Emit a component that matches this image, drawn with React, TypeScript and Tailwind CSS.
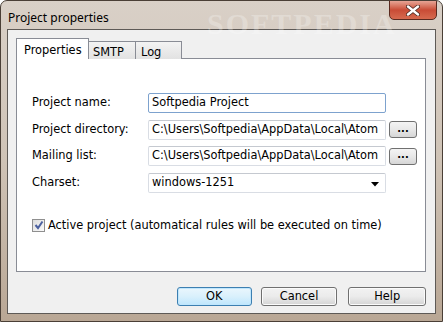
import React from "react";

const ui = { fontFamily: '"DejaVu Sans", Verdana, sans-serif' };

const Field = ({ label, value, browse, select, focused }: { label: string; value: string; browse?: boolean; select?: boolean; focused?: boolean }) => (
    <div className="flex items-center h-[20px]">
        <div className="w-[116px] shrink-0 text-[11.4px] text-black">{label}</div>
        <div
            className={`relative w-[238px] h-[20px] bg-white border rounded-[2px] flex items-center pl-[3px] overflow-hidden whitespace-nowrap text-[11.4px] text-black ${
                focused ? "border-[#7da2ce]" : "border-[#d9dde4] border-t-[#c5c9d0]"
            }`}
        >
            <span className="truncate">{value}</span>
            {select && (
                <svg className="absolute right-[6px] top-[8px]" width="8" height="5" viewBox="0 0 8 5">
                    <path d="M0 0 H8 L4 4.5 Z" fill="#000" />
                </svg>
            )}
        </div>
        {browse && (
            <button className="ml-[3px] w-[28px] h-[17px] rounded-[3px] border border-[#707070] bg-gradient-to-b from-[#f4f4f4] via-[#e8e8e8] to-[#d6d6d6] text-[10px] leading-none font-bold pb-[2px] text-black">
                ...
            </button>
        )}
    </div>
);

const Btn = ({ label, cls, def }: { label: string; cls: string; def?: boolean }) => (
    <button
        className={`${cls} h-[19px] rounded-[3px] border text-[11.4px] leading-none text-black ${
            def
                ? "border-[#3c7fb1] bg-gradient-to-b from-[#eaf6fd] via-[#d9f0fc] to-[#bee6fd] shadow-[inset_0_0_0_1px_#bfe6fd]"
                : "border-[#707070] bg-gradient-to-b from-[#f2f2f2] via-[#ebebeb] to-[#d4d4d4] shadow-[inset_0_0_0_1px_#fbfbfb]"
        }`}
    >
        {label}
    </button>
);

export default function App() {
    return (
        <div className="w-[443px] h-[322px] relative overflow-hidden rounded-t-[7px] border border-[#4a3f36] bg-gradient-to-b from-[#d9d0c7] via-[#cfc3b6] to-[#b9a795] flex flex-col" style={ui}>
            {/* watermark */}
            <div className="absolute left-[206px] top-[0px] text-[30px] font-bold tracking-[2px] text-white/25 select-none" style={{ fontFamily: '"Liberation Serif", serif' }}>
                SOFTPEDIA
            </div>

            {/* title bar */}
            <div className="h-[28px] shrink-0 flex items-start relative">
                <span className="ml-[7px] mt-[8px] text-[12px] text-black" style={{ fontFamily: '"Noto Sans", "Open Sans", sans-serif' }}>
                    Project properties
                </span>
                <div className="ml-auto mr-[5px] -mt-px w-[48px] h-[20px] rounded-b-[5px] border border-[#5a2a20] bg-gradient-to-b from-[#e6a495] via-[#c94c36] to-[#d66a4f] flex items-center justify-center">
                    <svg width="14" height="11" viewBox="0 0 14 11">
                        <path d="M2 1.5 L12 9.5 M12 1.5 L2 9.5" stroke="#4a2a22" strokeWidth="4" strokeLinecap="round" />
                        <path d="M2 1.5 L12 9.5 M12 1.5 L2 9.5" stroke="#fff" strokeWidth="2.4" strokeLinecap="round" />
                    </svg>
                </div>
            </div>

            {/* client area */}
            <div className="mx-[6px] h-[285px] shrink-0 border border-[#5e5a56] bg-[#f0f0f0] flex flex-col pt-[8px] pl-[8px] pr-[9px]">
                {/* tabs */}
                <div className="flex items-end h-[21px] relative z-10">
                    <div className="w-[73px] h-[21px] bg-white border border-b-0 border-[#898c95] pl-[7px] pt-[3px] text-[11.4px] text-black">
                        Properties
                    </div>
                    <div className="w-[47px] h-[18px] bg-gradient-to-b from-[#f3f3f3] to-[#e2e2e2] border border-l-0 border-b-0 border-[#898c95] pl-[4px] pt-[2px] text-[11.4px] text-black">
                        SMTP
                    </div>
                    <div className="w-[46px] h-[18px] bg-gradient-to-b from-[#f3f3f3] to-[#e2e2e2] border border-l-0 border-b-0 border-[#898c95] pl-[5px] pt-[2px] text-[11.4px] text-black">
                        Log
                    </div>
                </div>
                <div className="-mt-px h-[214px] bg-white border border-[#898c95] pl-[15px] pt-[34px] flex flex-col">
                    <div className="flex flex-col gap-[6.5px]">
                        <Field label="Project name:" value="Softpedia Project" focused />
                        <Field label="Project directory:" value="C:\Users\Softpedia\AppData\Local\Atom" browse />
                        <Field label="Mailing list:" value="C:\Users\Softpedia\AppData\Local\Atom" browse />
                        <Field label="Charset:" value="windows-1251" select />
                    </div>
                    <label className="mt-[24px] flex items-center gap-[3px] text-[11.4px] text-black">
                        <span className="w-[13px] h-[13px] border border-[#8f8f8f] bg-gradient-to-br from-[#dcdcdc] to-[#fbfbfb] flex items-center justify-center">
                            <svg width="10" height="10" viewBox="0 0 10 10">
                                <path d="M1.5 5 L4 8 L8.5 1.5" stroke="#4c61a0" strokeWidth="2" fill="none" />
                            </svg>
                        </span>
                        Active project (automatical rules will be executed on time)
                    </label>
                </div>

                {/* buttons */}
                <div className="mt-[15px] flex items-start pl-[161px]">
                    <Btn label="OK" cls="w-[75px]" def />
                    <Btn label="Cancel" cls="ml-[9px] w-[77px]" />
                    <Btn label="Help" cls="ml-[11px] w-[78px]" />
                </div>
            </div>
        </div>
    );
}
